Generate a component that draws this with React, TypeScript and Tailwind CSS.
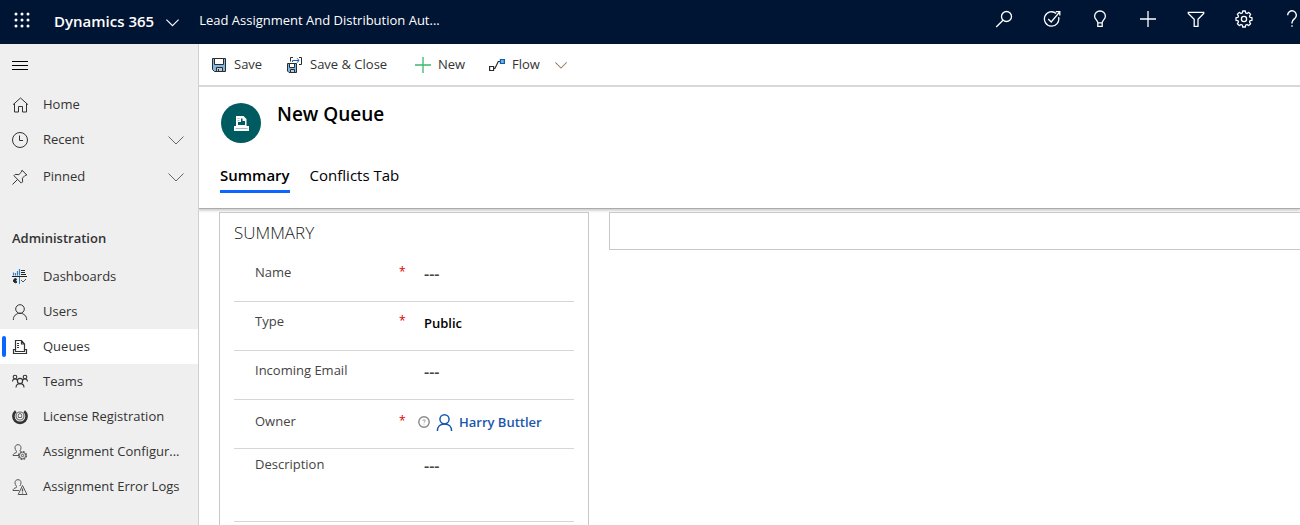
import type { ReactNode, SVGProps } from "react";

type IconProps = SVGProps<SVGSVGElement>;

function Icon({ children, ...rest }: IconProps & { children: ReactNode }) {
  return (
    <svg
      width="16"
      height="16"
      viewBox="0 0 16 16"
      fill="none"
      stroke="currentColor"
      strokeWidth="1"
      aria-hidden="true"
      className="shrink-0"
      {...rest}
    >
      {children}
    </svg>
  );
}

const WaffleIcon = () => (
  <Icon stroke="none" fill="currentColor">
    {[2, 8, 14].map((y) => [2, 8, 14].map((x) => <circle key={`${x}-${y}`} cx={x} cy={y} r="1.5" />))}
  </Icon>
);

const ChevronIcon = ({ size = 16 }: { size?: number }) => (
  <Icon width={size} height={size}>
    <path d="M.5 4.5 8 12l7.500-7.500" strokeWidth={size < 16 ? 1.400 : 1} />
  </Icon>
);

const SearchIcon = () => (
  <Icon width="18" height="18" viewBox="0 0 18 18" strokeWidth="1.3">
    <circle cx="11.5" cy="6.5" r="5" />
    <path d="M8 10.2 1.2 17" />
  </Icon>
);

const TargetIcon = () => (
  <Icon width="18" height="18" viewBox="0 0 18 18" strokeWidth="1.3">
    <path d="M13.200 3.400A7.200 7.200 0 1 0 15.600 7.200" />
    <path d="m5.200 9 3 3 8.300-9.800M12.800 1.600h4v4" />
  </Icon>
);

const BulbIcon = () => (
  <Icon width="18" height="18" viewBox="0 0 18 18" strokeWidth="1.3">
    <path d="M6.800 12.800C6.800 10.300 3.600 9.300 3.600 6.200a5.400 5.200 0 0 1 10.800 0c0 3.100-3.200 4.100-3.200 6.600" />
    <path d="M6.800 12.800h4.400v3.600H6.800z" />
  </Icon>
);

const AddIcon = () => (
  <Icon strokeWidth="1.300">
    <path d="M8 0v16M0 8h16" />
  </Icon>
);

const FunnelIcon = () => (
  <Icon width="18" height="18" viewBox="0 0 18 18" strokeWidth="1.3">
    <path d="M1.300 2.300h15.400v1.200L11 9.300v7H7.200v-7L1.300 3.500z" />
  </Icon>
);

const GearIcon = () => (
  <Icon width="18" height="18" viewBox="0 0 18 18" strokeWidth="1.3" strokeLinejoin="round">
    <path d="M7.700 1h2.600l.4 2 1.300.500 1.700-1.100 1.900 1.900-1.100 1.700.5 1.300 2 .4v2.600l-2 .4-.5 1.300 1.100 1.700-1.900 1.900-1.700-1.100-1.300.5-.4 2H7.700l-.4-2-1.300-.5-1.700 1.100-1.900-1.900 1.100-1.700-.5-1.300-2-.4V7.700l2-.4.5-1.300-1.100-1.700 1.900-1.900L6 3.500 7.300 3z" />
    <circle cx="9" cy="9" r="2.600" />
  </Icon>
);

const HelpIcon = () => (
  <Icon width="18" height="18" viewBox="0 0 18 18" strokeWidth="1.400">
    <path d="M4.700 5.200a4.300 4.300 0 1 1 7.300 3c-1.500 1.400-3 2.300-3 4.300v1" />
    <path d="M9 15.300v1.500" />
  </Icon>
);

const MenuIcon = () => (
  <Icon>
    <path d="M0 3.500h16M0 7.500h16M0 11.500h16" />
  </Icon>
);

const HomeIcon = () => (
  <Icon>
    <path d="m1 7.700 7.500-6.700L16 7.700M2.500 6.500v8.500h4V9.500h4V15h4V6.500" />
  </Icon>
);

const ClockIcon = () => (
  <Icon>
    <circle cx="8" cy="8" r="7.500" />
    <path d="M7.500 3.500v5H11" />
  </Icon>
);

const PinIcon = () => (
  <Icon>
    <path d="m10 1.200 4.800 4.800-1.800.5-2.600 2.700.2 3.600-1.300 1.300-7.400-7.400 1.300-1.300 3.600.2 2.700-2.600zM5.700 10.300.500 15.500" />
  </Icon>
);

const DashboardIcon = () => (
  <Icon>
    <path d="M1.500 6.500v-3M3.500 6.500V4M5.500 6.500V2M7.500 6.500V0" stroke="#2f80c8" strokeWidth="1.200" />
    <path d="M9 1.500h4M9 3.500h4M9 5.500h5M0 7.500h15" stroke="#222" />
    <path d="M7.500 8v7" stroke="#2f80c8" />
    <path d="M4.500 10a2 2 0 1 0 .5 3L3.500 12z" fill="#222" stroke="#222" />
    <path d="m9 11 2 2 3-3" stroke="#555" />
  </Icon>
);

const PersonIcon = ({ size = 16, weight = 1.2 }: { size?: number; weight?: number }) => (
  <Icon width={size} height={size} strokeWidth={weight}>
    <circle cx="8" cy="5" r="4.300" />
    <path d="M1.300 16C1.300 12 4 9.300 8 9.300s6.700 2.700 6.700 6.700" />
  </Icon>
);

const QueueIcon = () => (
  <Icon strokeWidth="1.200">
    <path d="M3.500 11V1.500h6L12.500 5v6M9.500 1.500V5h3" />
    <path d="M5 4.500h2M5 6.500h2M5 8.500h2" />
    <path d="M1.500 10.500h2v2h9v-2h2v4h-13z" />
  </Icon>
);

const QueueBadgeIcon = () => (
  <Icon stroke="none">
    <path fill="#fff" d="M3 1h7.500L13.500 4v7H16v5H1v-5h2z" />
    <path fill="#005b61" d="M5 10V7h3V3.500h1.500V6H12v4z" />
    <path stroke="#7fb0b3" strokeWidth=".8" d="M4.500 3.500h2M4.500 5.500h2M2.500 13.500h12" />
  </Icon>
);

const TeamsIcon = () => (
  <Icon strokeWidth="1.100">
    <circle cx="3" cy="3" r="1.800" />
    <circle cx="13" cy="3" r="1.800" />
    <circle cx="8" cy="7" r="2.600" />
    <path d="M.500 7.500C.500 6 1.500 5 3 5c1 0 1.700.500 2.500 1.300M15.500 7.500C15.500 6 14.500 5 13 5c-1 0-1.700.500-2.500 1.300M4 13.500c0-2.500 1.500-3.900 4-3.900s4 1.400 4 3.900" />
  </Icon>
);

const LicenseIcon = () => (
  <Icon>
    <path d="M3.800 2.200a6.600 6.600 0 1 0 8.400 0" strokeWidth="2.600" />
    <circle cx="8" cy="7" r="4" strokeWidth="1.100" stroke="#666" />
    <path d="M6.300 8.500V6.300a1.700 1.700 0 0 1 3.400 0v2.200z" stroke="#666" />
  </Icon>
);

const personOutline =
  "M7 11.500H1c0-1.500 1.300-2.300 3-2.800.8-.3.700-1 .3-1.700-.8-1-1.300-2-1.300-3.300C3 1.800 4.200.700 6 .700s3 1.100 3 3c0 1.300-.400 2.300-1.200 3.300";

const PersonGearIcon = () => (
  <Icon stroke="#555">
    <path d={personOutline} />
    <circle cx="10.500" cy="11.500" r="4" strokeWidth="1.200" strokeDasharray="1.800 1.340" />
    <circle cx="10.500" cy="11.500" r="3.200" />
    <circle cx="10.500" cy="11.500" r="1.200" />
  </Icon>
);

const PersonAlertIcon = () => (
  <Icon stroke="#555">
    <path d={personOutline} />
    <path d="m10.500 6.500 4.500 9H6.200z" />
    <path d="M10.500 9.500v3M10.500 13.500v1" strokeWidth="1.300" />
  </Icon>
);

const SaveIcon = () => (
  <Icon stroke="#2b2b2b">
    <path d="M1.500 1.500h13v13h-11l-2-2z" fill="#7cb9ea" />
    <path d="M3.500 1.500h9v6h-9z" fill="#fff" />
    <path d="M5.500 10.500h6v4h-6z" fill="#c8c8c8" />
    <path d="M7.500 12v2.500" />
  </Icon>
);

const SaveCloseIcon = () => (
  <Icon stroke="#2b2b2b">
    <path d="M.500 6.500h9v9H2l-1.500-1.500z" fill="#7cb9ea" />
    <path d="M2.500 6.500h5v4h-5z" fill="#fff" />
    <path d="M3.500 12.500h4v3h-4z" fill="#c8c8c8" />
    <path d="M3.500 4.500v-4H6M12 .500h2.500v7H12" />
    <path d="M5.500 5V3.500H12M9.800 1.200 12.200 3.500 9.800 5.800" stroke="#1464b4" />
  </Icon>
);

const FlowIcon = () => (
  <Icon stroke="#2b2b2b" strokeWidth="1.200">
    <path d="M.600 9.500h4v4h-4zM4.600 11.500h1.300l3.400-7h1.800" />
    <path d="M11.400 2.500h4v4h-4z" stroke="#0f5ea8" fill="#6cb2ea" />
  </Icon>
);

const headerActions = [
  { label: "Search", icon: <SearchIcon /> },
  { label: "Assistant", icon: <TargetIcon /> },
  { label: "Insights", icon: <BulbIcon /> },
  { label: "Quick create", icon: <AddIcon /> },
  { label: "Advanced find", icon: <FunnelIcon /> },
  { label: "Settings", icon: <GearIcon /> },
  { label: "Help", icon: <HelpIcon /> },
];

const adminItems = [
  { label: "Dashboards", icon: <DashboardIcon /> },
  { label: "Users", icon: <PersonIcon weight={1} /> },
  { label: "Queues", icon: <QueueIcon />, active: true },
  { label: "Teams", icon: <TeamsIcon /> },
  { label: "License Registration", icon: <LicenseIcon /> },
  { label: "Assignment Configur...", icon: <PersonGearIcon /> },
  { label: "Assignment Error Logs", icon: <PersonAlertIcon /> },
];

function TopBar() {
  return (
    <header className="flex h-11 items-center overflow-hidden bg-[#001433] text-white">
      <button aria-label="App launcher" className="flex h-11 w-11 items-center justify-center pb-1">
        <WaffleIcon />
      </button>
      <button className="ml-2.5 flex items-center gap-3 text-[15px] font-semibold whitespace-nowrap">
        <span className="pb-0.5">Dynamics 365</span>
        <ChevronIcon size={13} />
      </button>
      <span className="ml-5 pb-0.5 text-[13px] whitespace-nowrap">Lead Assignment And Distribution Aut...</span>
      <div className="-mr-4 ml-auto flex shrink-0">
        {headerActions.map((a) => (
          <button key={a.label} aria-label={a.label} className="flex h-11 w-12 items-center justify-center pb-1.5">
            {a.icon}
          </button>
        ))}
      </div>
    </header>
  );
}

function NavItem({ icon, label, active }: { icon: ReactNode; label: string; active?: boolean }) {
  return (
    <a
      href="#"
      aria-current={active ? "page" : undefined}
      className={`flex h-[35px] items-center pl-0.5 whitespace-nowrap ${active ? "bg-white" : ""}`}
    >
      <span className={`h-[21px] w-1 rounded-xs ${active ? "bg-[#0b66ff]" : ""}`} />
      <span className="ml-1.5">{icon}</span>
      <span className="ml-[15px] pt-px">{label}</span>
    </a>
  );
}

function NavGroup({ icon, label }: { icon: ReactNode; label: string }) {
  return (
    <button className="flex h-[35px] w-full items-center pr-3.5 pl-3 text-left">
      {icon}
      <span className="ml-[15px] flex-1">{label}</span>
      <span className="text-[#666]">
        <ChevronIcon />
      </span>
    </button>
  );
}

function Sidebar() {
  return (
    <nav className="w-[199px] shrink-0 border-r border-[#d0d0d0] bg-[#efefef] text-[13px] text-[#333]">
      <button aria-label="Toggle navigation" className="flex h-[43px] w-full items-center pl-3 text-black">
        <MenuIcon />
      </button>
      <NavItem icon={<HomeIcon />} label="Home" />
      <NavGroup icon={<ClockIcon />} label="Recent" />
      <div className="mt-0.5">
        <NavGroup icon={<PinIcon />} label="Pinned" />
      </div>
      <h2 className="mt-8 mb-2 h-[25px] pl-3 leading-6 font-semibold">Administration</h2>
      {adminItems.map((item) => (
        <NavItem key={item.label} {...item} />
      ))}
    </nav>
  );
}

function CommandBar() {
  return (
    <div className="flex h-[43px] items-center border-b-2 border-[#d8d8d8] pl-3 text-[13px] whitespace-nowrap text-[#333]">
      <button className="flex w-[76px] items-center gap-[7px]">
        <SaveIcon />
        <span className="pt-px">Save</span>
      </button>
      <button className="flex w-32 items-center gap-[7px]">
        <SaveCloseIcon />
        <span className="pt-px">Save &amp; Close</span>
      </button>
      <button className="flex w-[74px] items-center gap-[7px]">
        <span className="text-[#3fb56b]">
          <AddIcon />
        </span>
        <span className="pt-px">New</span>
      </button>
      <button className="flex items-center gap-[7px]">
        <FlowIcon />
        <span className="pt-px">Flow</span>
        <span className="ml-2 flex text-[#a08060]">
          <ChevronIcon size={12} />
        </span>
      </button>
    </div>
  );
}

function RecordHeader() {
  return (
    <div className="relative h-[122px] border-b border-[#ababab] pt-4 pl-[21px] shadow-[0_2px_2px_#d4d4d4]">
      <div className="flex gap-4 pl-px">
        <span className="flex size-10 items-center justify-center rounded-full bg-[#005b61]">
          <QueueBadgeIcon />
        </span>
        <h1 className="text-[19px] leading-[22px] font-semibold text-black">New Queue</h1>
      </div>
      <div role="tablist" className="mt-5 flex gap-5 text-[15px] leading-5 text-black">
        <button role="tab" aria-selected="true" className="h-[30px] border-b-3 border-[#0b66ff] pb-1 font-semibold">
          Summary
        </button>
        <button role="tab" aria-selected="false" className="h-[30px] border-b-3 border-transparent pb-1">
          Conflicts Tab
        </button>
      </div>
    </div>
  );
}

function Field({
  id,
  label,
  required,
  size = "normal",
  children,
}: {
  id: string;
  label: string;
  required?: boolean;
  size?: "normal" | "lookup" | "tall";
  children: ReactNode;
}) {
  const sizes = { normal: "h-[49px] pt-[9px]", lookup: "h-[49px] pt-[11px]", tall: "h-[73px] pt-[5px]" };
  return (
    <div className={`flex items-start border-b border-[#d6d6d6] pl-[21px] text-[13px] text-[#444] ${sizes[size]}`}>
      <label htmlFor={id} className="flex w-[169px] shrink-0 leading-5">
        <span className="w-36">{label}</span>
        {required && <span className="text-xs leading-5 text-[#e00000]">*</span>}
      </label>
      {children}
    </div>
  );
}

const valueClass = "mt-0.5 h-5 w-full min-w-0 appearance-none bg-transparent p-0 leading-5 font-semibold outline-none";

function SummarySection() {
  return (
    <section className="border border-[#c8c8c8] px-3.5 pb-8">
      <h2 className="h-10 pt-2 text-[17px] leading-6 font-light text-[#222]">SUMMARY</h2>
      <Field id="name" label="Name" required>
        <input id="name" defaultValue="---" className={`${valueClass} text-base`} />
      </Field>
      <Field id="type" label="Type" required>
        <select id="type" className={`${valueClass} text-black`}>
          <option>Public</option>
        </select>
      </Field>
      <Field id="email" label="Incoming Email">
        <input id="email" defaultValue="---" className={`${valueClass} text-base`} />
      </Field>
      <Field id="owner" label="Owner" required size="lookup">
        <span className="-ml-1.5 flex items-center gap-1.5 pt-px whitespace-nowrap">
          <Icon width="12" height="12" viewBox="0 0 12 12" stroke="#888">
            <circle cx="6" cy="6" r="5.200" strokeWidth="1.400" />
            <path d="M4.800 4.800c0-1.500 2.400-1.500 2.400 0 0 .900-1.200.900-1.200 2M6 7.800v.800" strokeWidth=".8" />
          </Icon>
          <a id="owner" href="#" className="flex items-center gap-1.5 leading-5 font-semibold text-[#1858ad]">
            <PersonIcon size={17} weight={1.400} />
            Harry Buttler
          </a>
        </span>
      </Field>
      <Field id="description" label="Description" size="tall">
        <textarea
          id="description"
          defaultValue="---"
          rows={2}
          className={`${valueClass} resize-none overflow-hidden text-base`}
        />
      </Field>
    </section>
  );
}

export default function App() {
  return (
    <div className="flex h-screen flex-col overflow-hidden bg-white font-['Open_Sans','Noto_Sans',sans-serif]">
      <TopBar />
      <div className="flex min-h-0 flex-1">
        <Sidebar />
        <main className="flex min-w-0 flex-1 flex-col overflow-hidden">
          <CommandBar />
          <RecordHeader />
          <div className="grid min-h-0 flex-1 grid-cols-[370px_1fr] items-start gap-5 pt-[3px] pl-5">
            <SummarySection />
            <section aria-label="Details" className="h-[38px] border border-r-0 border-[#c8c8c8]" />
          </div>
        </main>
      </div>
    </div>
  );
}
